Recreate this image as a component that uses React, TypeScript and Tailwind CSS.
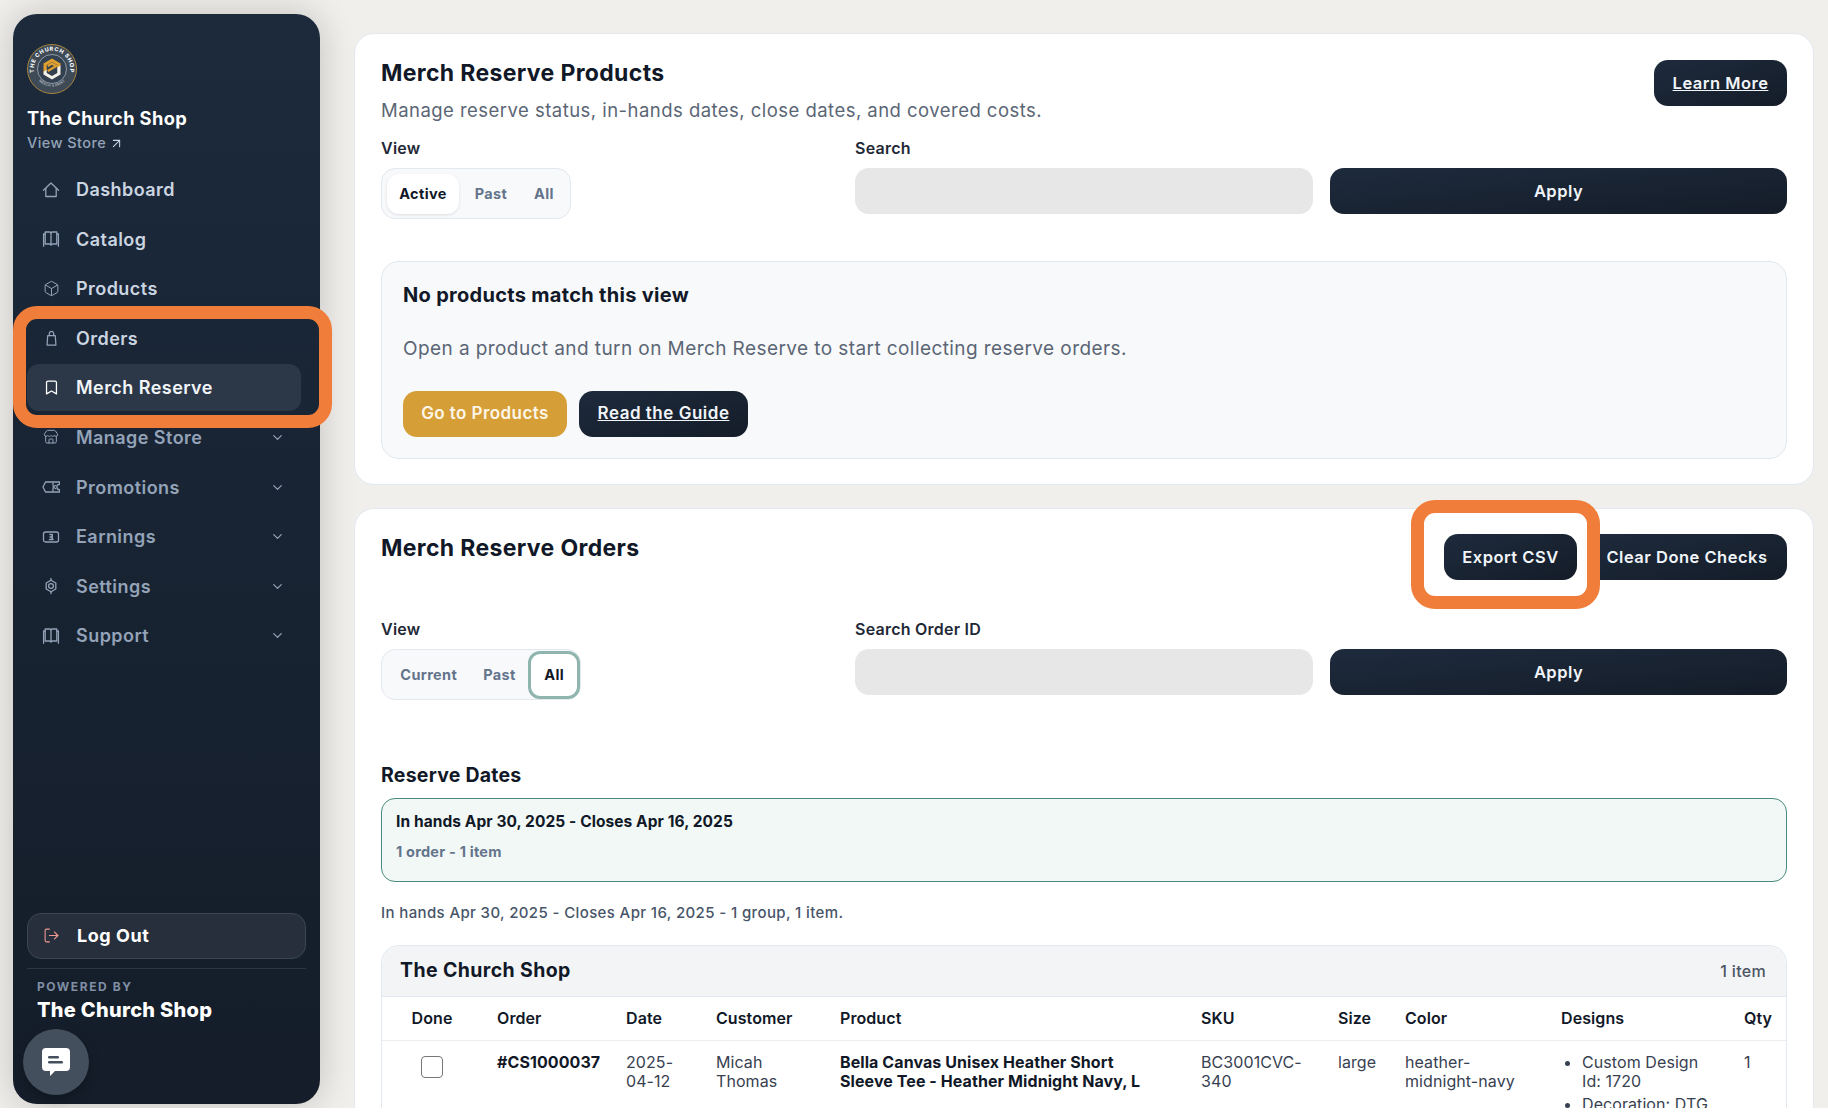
import type { ReactNode } from 'react'
import { ArrowUpRight, Bookmark, Box, ChevronDown, LogOut, Store } from 'lucide-react'

function Icon({ children, size = 18 }: { children: ReactNode; size?: number }) {
  return (
    <svg viewBox="0 0 18 18" width={size} height={size} fill="none" stroke="currentColor" strokeWidth="1.3" strokeLinejoin="round" strokeLinecap="round">
      {children}
    </svg>
  )
}

function HomeIcon() {
  return (
    <Icon>
      <path d="M1.5 9.2 9 2l7.5 7.2" />
      <path d="M3.8 7.5v8h10.4v-8" />
    </Icon>
  )
}

function BookIcon() {
  return (
    <Icon>
      <path d="M3.2 2h4.6c.7 0 1.2.4 1.2 1 0-.6.5-1 1.2-1h4.6v12h-4.6c-.7 0-1.2.3-1.2.9 0-.6-.5-.9-1.2-.9H3.2Z" />
      <path d="M9 3v12" />
      <path d="M3.2 4H1.6v12.2M14.8 4h1.6v12.2" />
    </Icon>
  )
}

function BagIcon() {
  return (
    <Icon size={17}>
      <path d="M5 6h8l.7 10H4.300Z" />
      <path d="M6.700 6V3.800a2.300 2.300 0 0 1 4.600 0V6" />
    </Icon>
  )
}

function TicketIcon() {
  return (
    <Icon>
      <path d="M3.500 4h14v2.300a2.700 2.700 0 0 0 0 5.400V14h-14L1 9Z" />
      <path d="M11 5v2.500M11 10.500V13M13.500 7.500 11 9l2.500 1.500" />
    </Icon>
  )
}

function EarningsIcon() {
  return (
    <Icon>
      <rect x="1.500" y="4" width="15" height="10" rx="2" />
      <path d="M8 6.500h2.200v5M7.500 11.500h3.500M8 9h2" strokeWidth="1.500" />
    </Icon>
  )
}

function SettingsIcon() {
  return (
    <Icon>
      <path d="M9 1.500v1.700M9 14.800v1.700" />
      <path d="M9 3.200 13.800 6v6L9 14.800 4.200 12V6Z" />
      <circle cx="9" cy="9" r="2.400" />
    </Icon>
  )
}

function Logo() {
  return (
    <svg viewBox="0 0 50 50" className="h-[50px] w-[50px]">
      <circle cx="25" cy="25" r="24.500" fill="#3e4a56" stroke="#a8843a" strokeWidth="1" />
      <circle cx="25" cy="25" r="14.500" fill="#334050" stroke="#cbd5e1" strokeWidth="0.600" />
      <defs>
        <path id="logo-top" d="M7.500 30A18.200 18.200 0 1 1 42.500 30" />
        <path id="logo-bottom" d="M10 35A18.500 18.500 0 0 0 40 35" />
      </defs>
      <text fontFamily="Inter, sans-serif" fontSize="5.600" fontWeight="800" fill="#f1f5f9" letterSpacing="0.650">
        <textPath href="#logo-top" startOffset="50%" textAnchor="middle">THE CHURCH SHOP</textPath>
      </text>
      <text fontFamily="Inter, sans-serif" fontSize="3.400" fontWeight="600" fill="#aeb7c2" letterSpacing="0.200">
        <textPath href="#logo-bottom" startOffset="50%" textAnchor="middle">MERCH &amp; PRINT</textPath>
      </text>
      <path d="M25 14.500 33.500 19.500v2.800l-3.200 1.900v-3.200L25 18l-5.300 3v5.500l-3.200 1.900v-8.900Z" fill="#e0a030" />
      <path d="M33.500 21.600v8.900L25 35.500l-8.500-5v-2.800l3.200-1.900v3.200L25 32l5.300-3v-5.500Z" fill="#f4f1e8" />
      <path d="M20.800 22 25 19.500l4.200 2.500-8.400 5" fill="none" stroke="#e0a030" strokeWidth="2.300" />
    </svg>
  )
}

const navItems: { label: string; icon: ReactNode }[] = [
  { label: 'Dashboard', icon: <HomeIcon /> },
  { label: 'Catalog', icon: <BookIcon /> },
  { label: 'Products', icon: <Box size={17} strokeWidth={1.4} /> },
]

const lowerNav: { label: string; icon: ReactNode }[] = [
  { label: 'Manage Store', icon: <Store size={16} strokeWidth={1.5} /> },
  { label: 'Promotions', icon: <TicketIcon /> },
  { label: 'Earnings', icon: <EarningsIcon /> },
  { label: 'Settings', icon: <SettingsIcon /> },
  { label: 'Support', icon: <BookIcon /> },
]

function NavRow({ label, icon, chevron, active, bright }: { label: string; icon: ReactNode; chevron?: boolean; active?: boolean; bright?: boolean }) {
  return (
    <div className={`flex h-[47px] items-center rounded-[12px] pl-[15px] pr-[16px] text-[18px] font-semibold tracking-[0.025em] ${active ? 'bg-[#2c3848] text-[#f1f5f9]' : bright ? 'text-[#cbd5e1]' : 'text-[#94a3b8]'}`}>
      <span className={`flex w-[18px] justify-center ${active ? 'text-white' : 'text-[#94a3b8]'}`}>{icon}</span>
      <span className="ml-[16px] flex-1">{label}</span>
      {chevron && <ChevronDown size={15} strokeWidth={2} className="text-[#94a3b8]" />}
    </div>
  )
}

function Sidebar() {
  return (
    <aside className="relative flex h-[1090px] w-[307px] shrink-0 flex-col rounded-[24px] bg-gradient-to-b from-[#1c2a3c] to-[#141d29] px-[14px] pt-[30px] shadow-[0_0_36px_rgba(0,0,0,0.2)]">
      <Logo />
      <div className="mt-[12px] text-[18.300px] font-bold leading-[24px] tracking-[0.02em] text-white">The Church Shop</div>
      <div className="mt-[3px] flex items-center gap-[3px] text-[14.500px] font-medium leading-[20px] tracking-[0.03em] text-[#94a3b8]">
        View Store <ArrowUpRight size={15} strokeWidth={1.700} className="text-[#cbd5e1]" />
      </div>
      <nav className="mt-[13px] flex w-[274px] flex-col gap-[2.600px]">
        {navItems.map((item) => (
          <NavRow key={item.label} label={item.label} icon={item.icon} bright />
        ))}
        <NavRow label="Orders" icon={<BagIcon />} bright />
        <NavRow label="Merch Reserve" icon={<Bookmark size={17} strokeWidth={1.800} />} active />
        {lowerNav.map((item) => (
          <NavRow key={item.label} label={item.label} icon={item.icon} chevron />
        ))}
      </nav>
      <div className="mt-auto">
        <button className="flex h-[46px] w-[279px] items-center rounded-[14px] border border-[#3a4655] bg-[#272f3c] pb-[2px] pl-[15px] text-[18px] font-bold tracking-[0.03em] text-white">
          <LogOut size={17} strokeWidth={1.500} className="text-[#f19a91]" />
          <span className="ml-[17px]">Log Out</span>
        </button>
        <div className="mt-[9px] w-[279px] border-t border-[#2b3543] pl-[10px] pt-[9px]">
          <div className="text-[12px] font-bold leading-[18px] tracking-[0.13em] text-[#7f8ea3]">POWERED BY</div>
          <div className="mt-[1px] text-[20px] font-extrabold leading-[26px] tracking-[0.015em] text-white">The Church Shop</div>
        </div>
        <div className="mb-[9px] ml-[-4px] mt-[6px] flex h-[66px] w-[66px] items-center justify-center rounded-full bg-[#444f5d] shadow-[0_4px_12px_rgba(0,0,0,0.25)]">
          <svg viewBox="0 0 28 28" className="h-[28px] w-[28px]">
            <path d="M4 0h20a4 4 0 0 1 4 4v15a4 4 0 0 1-4 4H13l-5 5v-5H4a4 4 0 0 1-4-4V4a4 4 0 0 1 4-4Z" fill="#fff" />
            <rect x="6" y="8" width="11" height="2.600" rx="1.300" fill="#444f5d" />
            <rect x="6" y="13" width="15" height="2.600" rx="1.300" fill="#444f5d" />
          </svg>
        </div>
      </div>
      {/* Orange callout round Orders / Merch Reserve */}
      <div className="absolute left-0 top-[292px] h-[122px] w-[319px] rounded-[24px] border-[13px] border-[#f07e3a]" />
    </aside>
  )
}

function DarkButton({ children, className = '' }: { children: ReactNode; className?: string }) {
  return (
    <button className={`flex h-[46px] items-center justify-center rounded-[14px] bg-gradient-to-br from-[#1e2b3d] to-[#141c28] text-[16.500px] font-semibold tracking-[0.03em] text-[#f1f5f9] ${className}`}>
      {children}
    </button>
  )
}

function Segment({ label, active, ring, className = '' }: { label: string; active?: boolean; ring?: boolean; className?: string }) {
  return (
    <span className={`flex items-center justify-center rounded-[12px] text-[14.500px] font-bold tracking-[0.025em] ${active ? 'bg-white text-[#111827]' : 'text-[#64748b]'} ${active && !ring ? 'shadow-[0_1px_3px_rgba(15,23,42,0.12)]' : ''} ${ring ? 'border-[3px] border-[#8fb5ae]' : ''} ${className}`}>
      {label}
    </span>
  )
}

function FilterRow({ searchLabel, segments }: { searchLabel: string; segments: ReactNode }) {
  return (
    <div className="flex">
      <div className="w-[474px]">
        <div className="text-[16px] font-semibold leading-[20px] tracking-[0.015em] text-[#1f2937]">View</div>
        <div className="mt-[10px]">{segments}</div>
      </div>
      <div className="w-[458px]">
        <div className="text-[16px] font-semibold leading-[20px] tracking-[0.015em] text-[#1f2937]">{searchLabel}</div>
        <div className="mt-[10px] h-[46px] rounded-[14px] bg-[#e7e7e7]" />
      </div>
      <div className="ml-[17px] flex-1 pt-[30px]">
        <DarkButton className="w-full">Apply</DarkButton>
      </div>
    </div>
  )
}

const headers = ['Done', 'Order', 'Date', 'Customer', 'Product', 'SKU', 'Size', 'Color', 'Designs', 'Qty']

function OrdersTable() {
  return (
    <div className="mt-[21px] rounded-t-[18px] border border-b-0 border-[#e2e8f0]">
      <div className="flex h-[51px] items-center justify-between rounded-t-[18px] border-b border-[#e2e8f0] bg-[#f3f4f6] pl-[18px] pr-[20px]">
        <span className="text-[19.500px] font-bold tracking-[0.02em] text-[#111827]">The Church Shop</span>
        <span className="text-[16px] font-medium tracking-[0.02em] text-[#4b5563]">1 item</span>
      </div>
      <table className="w-full table-fixed border-collapse text-[16px] leading-[19px] tracking-[0.005em] text-[#374151]">
        <colgroup>
          <col className="w-[100px]" />
          <col className="w-[129px]" />
          <col className="w-[90px]" />
          <col className="w-[124px]" />
          <col className="w-[361px]" />
          <col className="w-[137px]" />
          <col className="w-[67px]" />
          <col className="w-[156px]" />
          <col className="w-[183px]" />
          <col />
        </colgroup>
        <thead>
          <tr className="h-[43px] border-b border-[#eceef1]">
            {headers.map((h, i) => (
              <th key={h} className={`px-[15px] font-semibold text-[#111827] ${i === 0 ? 'text-center' : 'text-left'}`}>{h}</th>
            ))}
          </tr>
        </thead>
        <tbody>
          <tr className="align-top">
            <td className="px-[15px] pt-[12px]">
              <div className="mx-auto mt-[3px] h-[22px] w-[22px] rounded-[4px] border border-[#767676] bg-white" />
            </td>
            <td className="px-[15px] pt-[12px] font-bold text-[#111827]">#CS1000037</td>
            <td className="px-[15px] pt-[12px]">2025-04-12</td>
            <td className="px-[15px] pt-[12px]">Micah Thomas</td>
            <td className="pl-[15px] pr-[40px] pt-[12px] font-bold text-[#111827]">Bella Canvas Unisex Heather Short Sleeve Tee - Heather Midnight Navy, L</td>
            <td className="px-[15px] pt-[12px]">BC3001CVC-340</td>
            <td className="px-[15px] pt-[12px]">large</td>
            <td className="px-[15px] pt-[12px]">heather-midnight-navy</td>
            <td className="pl-[15px] pr-[24px] pt-[12px]">
              <ul className="list-disc pl-[21px]">
                <li>Custom Design Id: 1720</li>
                <li className="mt-[4px] whitespace-nowrap">Decoration: DTG</li>
              </ul>
            </td>
            <td className="px-[15px] pt-[12px]">1</td>
          </tr>
        </tbody>
      </table>
    </div>
  )
}

export default function App() {
  return (
    <div className="h-[1120px] overflow-hidden bg-white font-['Inter',sans-serif]">
      <div className="flex h-[1108px] overflow-hidden bg-[#f1efec] pl-[13px] pr-[14px] pt-[14px]">
        <Sidebar />
        <main className="ml-[34px] flex min-w-0 flex-1 flex-col gap-[23px] pt-[19px]">
          {/* Merch Reserve Products */}
          <section className="h-[452px] shrink-0 rounded-[20px] border border-[#e2e8f0] bg-white px-[26px] pt-[24px]">
            <div className="flex items-start justify-between">
              <div>
                <h2 className="text-[23px] font-bold leading-[30px] tracking-[0.015em] text-[#111827]">Merch Reserve Products</h2>
                <p className="mt-[10px] text-[18.500px] leading-[24px] tracking-[0.025em] text-[#5b6675]">Manage reserve status, in-hands dates, close dates, and covered costs.</p>
              </div>
              <DarkButton className="mt-[2px] w-[133px] underline">Learn More</DarkButton>
            </div>
            <div className="mt-[16px]">
              <FilterRow
                searchLabel="Search"
                segments={
                  <div className="flex h-[51px] w-[190px] items-center rounded-[14px] border border-[#e2e8f0] bg-[#f8f9fb] pl-[5px]">
                    <Segment label="Active" active className="h-[40px] w-[72px]" />
                    <Segment label="Past" className="ml-[2px] h-[40px] w-[60px]" />
                    <Segment label="All" className="h-[40px] w-[46px]" />
                  </div>
                }
              />
            </div>
            <div className="mt-[42px] h-[198px] rounded-[18px] border border-[#e2e8f0] bg-[#f8f9fb] px-[21px] pt-[19px]">
              <h3 className="text-[20px] font-bold leading-[28px] tracking-[0.015em] text-[#111827]">No products match this view</h3>
              <p className="mt-[28px] text-[19px] leading-[24px] tracking-[0.022em] text-[#5b6675]">Open a product and turn on Merch Reserve to start collecting reserve orders.</p>
              <div className="mt-[30px] flex gap-[12px]">
                <button className="h-[46px] w-[164px] rounded-[14px] bg-[#d69e36] text-[17px] font-semibold tracking-[0.025em] text-[#fdf6e8]">Go to Products</button>
                <DarkButton className="w-[169px] text-[17px] underline">Read the Guide</DarkButton>
              </div>
            </div>
          </section>

          {/* Merch Reserve Orders */}
          <section className="relative flex-1 rounded-t-[20px] border border-b-0 border-[#e2e8f0] bg-white px-[26px] pt-[25px]">
            <div className="flex items-start justify-between">
              <h2 className="text-[23px] font-bold leading-[28px] tracking-[0.015em] text-[#111827]">Merch Reserve Orders</h2>
              <div className="flex">
                <DarkButton className="w-[133px]">Export CSV</DarkButton>
                <DarkButton className="ml-[10px] w-[200px] text-[#e2e8f0]">Clear Done Checks</DarkButton>
              </div>
            </div>
            <div className="mt-[39px]">
              <FilterRow
                searchLabel="Search Order ID"
                segments={
                  <div className="flex h-[51px] w-[200px] items-center rounded-[14px] border border-[#e2e8f0] bg-[#f8f9fb] pl-[5px]">
                    <Segment label="Current" className="h-[40px] w-[84px]" />
                    <Segment label="Past" className="h-[40px] w-[58px]" />
                    <Segment label="All" active ring className="h-[48px] w-[52px]" />
                  </div>
                }
              />
            </div>
            <h3 className="mt-[61px] text-[19.500px] font-bold leading-[28px] tracking-[0.012em] text-[#111827]">Reserve Dates</h3>
            <div className="mt-[9px] h-[84px] rounded-[14px] border border-[#4c8a7f] bg-[#f1f8f6] px-[14px] pt-[12px]">
              <div className="text-[15.500px] font-bold leading-[22px] tracking-[0.005em] text-[#111827]">In hands Apr 30, 2025 - Closes Apr 16, 2025</div>
              <div className="mt-[9px] text-[14.500px] font-bold leading-[20px] tracking-[0.015em] text-[#64748b]">1 order - 1 item</div>
            </div>
            <p className="mt-[20px] text-[15px] font-medium leading-[22px] tracking-[0.025em] text-[#475569]">In hands Apr 30, 2025 - Closes Apr 16, 2025 - 1 group, 1 item.</p>
            <OrdersTable />
            {/* Orange callout round Export CSV */}
            <div className="absolute left-[1056px] top-[-9px] h-[109px] w-[189px] rounded-[24px] border-[13px] border-[#f07e3a]" />
          </section>
        </main>
      </div>
    </div>
  )
}
